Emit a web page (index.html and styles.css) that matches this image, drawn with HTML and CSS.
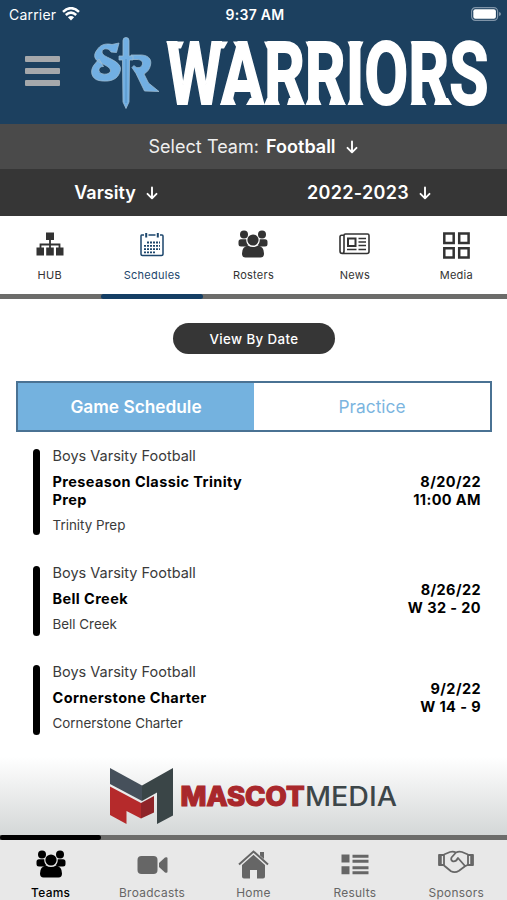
FILE: index.html
```html
<!DOCTYPE html>
<html lang="en">
<head>
  <meta charset="UTF-8">
  <meta name="viewport" content="width=device-width, initial-scale=1.0">
  <title>Warriors</title>
  <link rel="stylesheet" href="styles.css">
</head>
<body>
  <svg class="defs">
    <symbol id="people" viewBox="0 0 30 28">
      <circle cx="6" cy="4.5" r="4"/>
      <circle cx="24" cy="4.5" r="4"/>
      <path d="M3 9.300h5.200c0 3 .8 4.600 2 5.700L9 16.500H3Q.5 16.500 .5 14v-2.200Q.5 9.300 3 9.300zM27 9.300h-5.200c0 3-.8 4.600-2 5.700l1.200 1.500h6q2.500 0 2.500-2.500v-2.200Q29.500 9.300 27 9.300z"/>
      <circle cx="15" cy="10" r="5.600"/>
      <path d="M10 15.500q5 3 10 0 6 1 6 8 0 4-3.500 4h-15q-3.500 0-3.500-4 0-7 6-8z"/>
    </symbol>
    <symbol id="arrow" viewBox="0 0 12 14">
      <path d="M6 1.500v10.500M1.500 7.800 6 12.300l4.500-4.500" fill="none" stroke="currentColor" stroke-width="1.900" stroke-linecap="round" stroke-linejoin="round"/>
    </symbol>
  </svg>

  <div class="app">
    <header class="header">
      <div class="status">
        <div class="carrier">
          <span>Carrier</span>
          <svg class="wifi" viewBox="0 0 18 14"><path d="M1 4.800Q9-2.500 17 4.800M3.800 8q5.200-4.700 10.400 0" fill="none" stroke="#fff" stroke-width="2.500"/><path d="M9 13.500 5.900 10.300q3.100-2.600 6.200 0z" fill="#fff"/></svg>
        </div>
        <span class="time">9:37 AM</span>
        <svg class="battery" viewBox="0 0 30 14"><rect x=".6" y=".6" width="26" height="12.800" rx="3.800" fill="none" stroke="#7f94a8" stroke-width="1.200"/><rect x="2.300" y="2.300" width="22.600" height="9.400" rx="2" fill="#fff"/><path d="M28 5q2 .5 2 2t-2 2z" fill="#7f94a8"/></svg>
      </div>
      <div class="brand">
        <button class="menu" aria-label="Menu"><i></i><i></i><i></i></button>
        <svg class="logo" viewBox="0 0 400 76">
          <g fill="#71afe3" stroke="#9dbbd0" stroke-width=".8" stroke-linejoin="round">
            <path d="M28 6 25.500 15.500 20 15C18 10.500 11 11 11 15c0 3 4 4.500 9 7 10 5 11 9 8 15-3 7-12 8-20 6.500C.5 42-1.500 34 3 28l5-6 4.500 7.500C7 29 6 36 12 37c5 1 9-2 7-5-1-2-5-4-9-6-7-3-8-8-4-13C9 8 14 6 21 7.500z"/>
            <path d="M40 18h8c9-.5 13 4 11.500 10-.8 4-3 7-6.500 9l4.500 9L68 54.500 53.500 54 45 36.500 41 30.500l2-2c3 4 8 2 8.500-1.500.4-3-2-4.500-5.500-4.500h-6z"/>
            <path d="M32 19V3.500Q32 .5 35 .5t3 3V19h4v4h-3.500l-.5 42-3 6.500-3-6.500-.5-42H28v-4z"/>
          </g>
          <path d="M35 22v44" stroke="#5390c2" stroke-width="1" fill="none"/>
          <text class="wordmark" x="75.500" y="67" textLength="322" lengthAdjust="spacingAndGlyphs">WARRIORS</text>
          <!-- flared stem ends -->
          <path fill="#fff" d="M75 4.500h18l-3 7H79zM121 4.500h16l-4 7h-9zM142 4.500h14l-2 7h-8zM129 68l3-7h10l3 7zM155 68l4-7h9l4 7zM173 4.500h8v7h-5zM173 68l3-7h10l3 7zM196 68l2-7h12l4 7zM214.500 4.500h8v7h-5zM214.500 68l3-7h10l3 7zM238 68l2-7h11l4 7zM256.500 4.500h16l-3 7h-10zM256.500 68l3-7h10l3 7zM319.500 4.500h8v7h-5zM319.500 68l3-7h10l3 7zM343 68l2-7h12l4 7z"/>
        </svg>
      </div>
    </header>

    <div class="team-bar">
      <span>Select Team:</span>
      <b>Football</b>
      <svg class="arrow"><use href="#arrow"/></svg>
    </div>
    <div class="filter-bar">
      <div class="filter"><b class="level">Varsity</b><svg class="arrow"><use href="#arrow"/></svg></div>
      <div class="filter"><b class="year">2022-2023</b><svg class="arrow"><use href="#arrow"/></svg></div>
    </div>

    <nav class="tabs">
      <a class="tab">
        <svg width="28" height="24" viewBox="0 0 28 24"><path d="M10 .500h8V8h-8zM.5 15.500H8v8H.5zM10.200 15.500h7.600v8h-7.600zM20 15.500h7.500v8H20z"/><path d="M14 7v10M4.500 17v-4.500h19V17" fill="none" stroke="currentColor" stroke-width="1.800"/></svg>
        <span>HUB</span>
      </a>
      <a class="tab active">
        <svg class="line" width="24" height="25" viewBox="0 0 24 25"><path d="M4 3H1.500Q1 3 1 4v18q0 1.500 1.500 1.500h19Q23 23.500 23 22V4q0-1-1-1h-2M8.500 3h7" stroke-width="1.500"/><path d="M6.200 1v4.500M17.800 1v4.500" stroke-width="2"/><path d="M7 10.500h13M4 13.800h16M4 17.100h16M4 20.400h12" stroke-width="1.800" stroke-dasharray="2 1"/></svg>
        <span>Schedules</span>
      </a>
      <a class="tab">
        <svg width="30" height="28"><use href="#people"/></svg>
        <span>Rosters</span>
      </a>
      <a class="tab">
        <svg class="line" width="31" height="24" viewBox="0 0 31 24" stroke-width="1.600"><path d="M5 3.200H2.500Q1 3.200 1 5v14q0 2.500 2.300 2.500H28q2 0 2-2V3.500Q30 2 28.500 2H6.500Q5 2 5 3.500V19q0 2.500-2 2.500"/><path d="M9 6.500h7.500V14H9z" stroke-width="2"/><path d="M19.500 6.500H27M19.500 10H27M19.500 13.500H27M8 17.500h9.500M19.500 17.500H27"/></svg>
        <span>News</span>
      </a>
      <a class="tab">
        <svg class="line media" width="27" height="27" viewBox="0 0 27 27" stroke-width="2.500"><path d="M1.300 1.500h9.400v9.400H1.300zM16.200 1.500h9.400v9.400h-9.400zM1.300 16.200h9.400v9.400H1.300zM16.200 16.200h9.400v9.400h-9.400z"/></svg>
        <span>Media</span>
      </a>
    </nav>

    <main class="content">
      <button class="view-btn">View By Date</button>
      <div class="segment">
        <div class="seg on">Game Schedule</div>
        <div class="seg">Practice</div>
      </div>
      <section class="games">
        <article class="game">
          <div class="info">
            <p class="team">Boys Varsity Football</p>
            <h3>Preseason Classic Trinity Prep</h3>
            <p class="venue">Trinity Prep</p>
          </div>
          <div class="result">8/20/22<br>11:00 AM</div>
        </article>
        <article class="game">
          <div class="info">
            <p class="team">Boys Varsity Football</p>
            <h3>Bell Creek</h3>
            <p class="venue">Bell Creek</p>
          </div>
          <div class="result">8/26/22<br>W 32 - 20</div>
        </article>
        <article class="game">
          <div class="info">
            <p class="team">Boys Varsity Football</p>
            <h3>Cornerstone Charter</h3>
            <p class="venue">Cornerstone Charter</p>
          </div>
          <div class="result">9/2/22<br>W 14 - 9</div>
        </article>
      </section>
    </main>

    <div class="sponsor">
      <svg width="290" height="60" viewBox="0 0 290 60">
        <path d="M0 1 32 18.500V34L0 17z" fill="#46505b"/>
        <path d="M32 18.500 63 1v47.500L47 57V25.500L32 34z" fill="#3a4547"/>
        <path d="M0 19.500 31 36v15.500L16.500 44v13L0 48z" fill="#b52a2b"/>
        <path d="M31 36 44 29v16.500l-13 6z" fill="#8f2428"/>
        <text class="mm-bold" x="70.500" y="39" textLength="124" lengthAdjust="spacingAndGlyphs">MASCOT</text>
        <text class="mm-light" x="195" y="39" textLength="92" lengthAdjust="spacingAndGlyphs">MEDIA</text>
      </svg>
    </div>

    <nav class="bottom-nav">
      <a class="tab active">
        <svg class="teams" width="30" height="28"><use href="#people"/></svg>
        <span>Teams</span>
      </a>
      <a class="tab">
        <svg width="31" height="20" viewBox="0 0 31 20"><rect x=".5" y="1" width="20" height="18" rx="4"/><path d="M22 8 28 2.500q2.500-1 2.500 1v13q0 2-2.500 1L22 12z"/></svg>
        <span>Broadcasts</span>
      </a>
      <a class="tab">
        <svg width="31" height="29" viewBox="0 0 31 29"><path d="M1 14.500 15.500 1.500 30 14.500" fill="none" stroke="currentColor" stroke-width="2"/><path d="M22 2h4v7l-4-3.500zM15.500 4.800 27 15v11.500q0 2-2 2h-6V20h-7v8.500H6q-2 0-2-2V15z"/></svg>
        <span>Home</span>
      </a>
      <a class="tab">
        <svg width="28" height="21" viewBox="0 0 28 21"><path d="M.5 .5h8v8h-8zM.5 12.200h8v8h-8zM11.500 .8h16v3h-16zM11.500 5.800h16v3h-16zM11.500 12.200h16v3h-16zM11.500 17.200h16v3h-16z"/></svg>
        <span>Results</span>
      </a>
      <a class="tab">
        <svg class="line shake" width="36" height="24" viewBox="0 0 36 24" stroke-width="1.800" stroke-linejoin="round"><path d="M6 4.500 12 2q3-1 6 .5Q21 1 24 2l6 2.500M6 15.500l7 5.800q4 2 8-.5l6-4.500 3-1.500M18 2.500l-4.500 5q-1 3 1.500 3.800 3 .5 5-3.300l7 8"/><path d="M1 5h5v10H1zM30 5h5v10h-5z"/><path d="M2.500 5v10M33.500 5v10" stroke-width="2.500"/></svg>
        <span>Sponsors</span>
      </a>
    </nav>
  </div>
</body>
</html>
```

FILE: styles.css
```css
*{margin:0;padding:0;box-sizing:border-box;}
body{background:#fff;font-family:Inter, "Liberation Sans", sans-serif;color:#000;}
button{border:0;font-family:inherit;}
svg{display:block;fill:currentColor;}
svg.line{fill:none;stroke:currentColor;}
.defs{display:none;}
.app{display:flex;flex-direction:column;width:507px;height:900px;overflow:hidden;}

.header{height:124px;background:#1c405f;color:#fff;}
.status{display:grid;grid-template-columns:1fr auto 1fr;align-items:center;height:28px;padding:0 6px 0 9px;font-size:14px;}
.carrier{display:flex;align-items:center;gap:6px;letter-spacing:.2px;}
.wifi{width:18px;height:14px;}
.time{font-weight:600;letter-spacing:.3px;}
.battery{justify-self:end;width:30px;height:14px;}
.brand{display:flex;align-items:flex-start;padding:9px 0 0 25px;}
.menu{display:flex;flex-direction:column;gap:6px;width:36px;margin:19px 30px 0 0;background:none;}
.menu i{width:35px;height:6px;border-radius:1px;background:#a5a8ab;}
.logo{overflow:visible;width:400px;height:76px;}
.wordmark{fill:#fff;stroke:#fff;stroke-width:1.8px;font-family:Roboto, sans-serif;font-size:87px;font-weight:700;}

.team-bar{display:flex;justify-content:center;align-items:center;height:45px;padding-right:1px;background:#4a4a4a;color:#efefef;font-size:18px;}
.team-bar span{letter-spacing:.05px;}
.team-bar b{margin:0 10px 0 7px;}
.team-bar b,.filter b{font-weight:600;color:#fff;}
.arrow{width:12px;height:14px;color:#fff;}
.filter-bar{display:flex;height:47px;padding-right:20px;background:#363636;font-size:18px;}
.filter{display:flex;justify-content:center;align-items:center;gap:10px;flex:1;}
.filter:first-child{flex:0 0 232px;}
.filter:last-child{padding-left:19px;}
.year{letter-spacing:.3px;}

.tabs,.bottom-nav{display:grid;grid-template-columns:repeat(5,1fr);}
.tab{display:flex;flex-direction:column;align-items:center;position:relative;}
.tab svg{flex:none;margin:auto 0;}
.tabs{height:83px;border-bottom:5px solid #6c6c6a;color:#333;}
.tabs .tab{padding-top:5px;}
.tabs .tab:first-child{right:1px;}
.tabs span{height:27px;font-size:11px;letter-spacing:.25px;line-height:16px;}
.tabs .media{position:relative;top:1px;}
.tabs .active{color:#1c466c;}
.tabs .active::after{content:"";position:absolute;left:0;right:0;bottom:-5px;height:5px;border-radius:3px;background:#143e64;}

.content{flex:1;padding:24px 15px 0 16px;}
.view-btn{display:block;width:162px;height:31px;margin:0 auto;border-radius:16px;background:#363636;color:#fff;font-size:13.3px;font-weight:500;letter-spacing:.4px;}
.segment{display:flex;height:51px;margin-top:27px;border:2px solid #4a7293;}
.seg{display:flex;justify-content:center;align-items:center;flex:1;color:#7bb5df;font-size:17.3px;}
.seg.on{background:#74b2df;color:#fff;font-weight:600;}
.games{display:flex;flex-direction:column;gap:29px;padding:17px 11px 0 17px;}
.game{display:flex;justify-content:space-between;align-items:center;}
.info{position:relative;width:220px;padding:0 0 4px 19.5px;}
.info::before{content:"";position:absolute;left:0;top:0;bottom:0;width:7px;border-radius:4px;background:#000;}
.game:first-child .info::before{bottom:2px;}
.team{color:#3a3a3a;font-size:14.5px;line-height:14px;}
.info h3{margin-top:10px;font-size:14.5px;font-weight:700;letter-spacing:.4px;line-height:18px;}
.venue{margin-top:8px;color:#3a3a3a;font-size:13.4px;line-height:16px;}
.result{padding-bottom:5px;font-size:14.5px;font-weight:700;letter-spacing:.4px;line-height:18px;text-align:right;}

.sponsor{display:flex;justify-content:center;height:85px;padding:17px 0 0 3px;background:linear-gradient(#fff 8%,#d4d7d7);}
.mm-bold{fill:#a9282c;stroke:#a9282c;stroke-width:1.2px;font-size:26.5px;font-weight:800;}
.mm-light{fill:#3d4649;font-size:26.5px;font-weight:500;}

.bottom-nav{height:65px;border-top:5px solid #6c6c6a;background:#e8e8e8;color:#666;}
.bottom-nav .tab{padding-top:4px;}
.bottom-nav span{height:15px;font-size:11.9px;letter-spacing:.3px;line-height:16px;}
.bottom-nav .teams{position:relative;top:-1px;}
.bottom-nav .shake{position:relative;top:-3px;}
.bottom-nav .active{color:#000;}
.bottom-nav .active span{font-weight:500;}
.bottom-nav .active::after{content:"";position:absolute;left:0;right:0;top:-5px;height:5px;border-radius:3px;background:#000;}
```
